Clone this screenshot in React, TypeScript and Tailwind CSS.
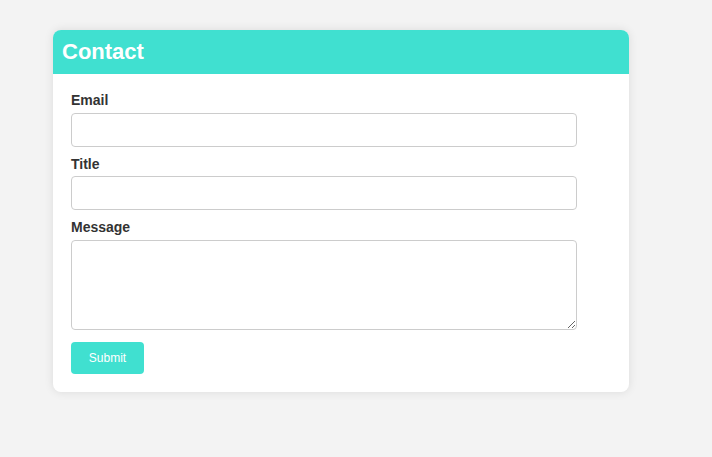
import React from "react";

export default function App() {
  return (
    <div className="min-h-[457px] w-full bg-[#f3f3f3] pt-[30px] pl-[53px]" style={{ fontFamily: '"Liberation Sans", Arial, sans-serif' }}>
      <div className="w-[576px] rounded-[8px] bg-white shadow-[0_0_10px_rgba(0,0,0,0.1)] overflow-hidden">
        <div className="h-[44px] bg-[#40e0d0] flex items-center px-[9px]">
          <h1 className="text-[22px] font-bold text-white leading-none">Contact</h1>
        </div>
        <form className="px-[18px] pt-[18px] pb-[18px] flex flex-col" onSubmit={(e) => e.preventDefault()}>
          <label className="text-[14px] font-bold text-[#333] leading-[17px] mb-[4px]">Email</label>
          <input type="text" className="w-[506px] h-[34px] rounded-[4px] border border-[#ccc] bg-white outline-none" />
          <label className="text-[14px] font-bold text-[#333] leading-[18px] mb-[3px] mt-[8px]">Title</label>
          <input type="text" className="w-[506px] h-[34px] rounded-[4px] border border-[#ccc] bg-white outline-none" />
          <label className="text-[14px] font-bold text-[#333] leading-[18px] mb-[4px] mt-[8px]">Message</label>
          <textarea className="w-[506px] h-[90px] rounded-[4px] border border-[#ccc] bg-white outline-none block" />
          <div className="mt-[12px]">
            <button type="submit" className="h-[32px] w-[73px] rounded-[4px] bg-[#40e0d0] text-white text-[12px]">Submit</button>
          </div>
        </form>
      </div>
    </div>
  );
}
